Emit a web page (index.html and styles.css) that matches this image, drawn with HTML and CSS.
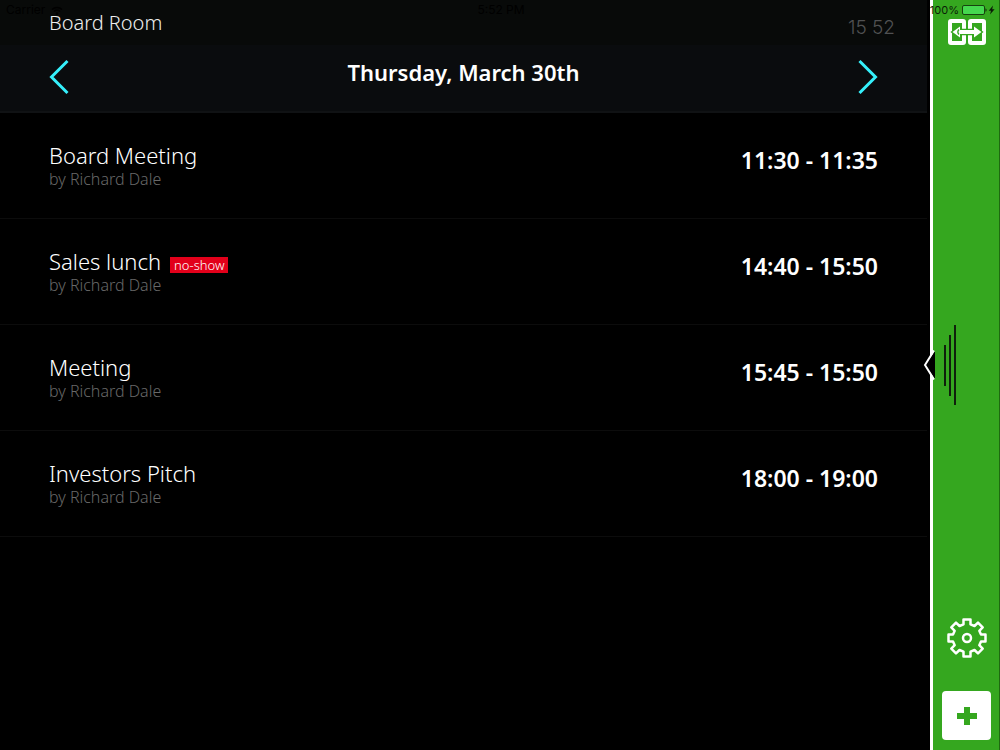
FILE: index.html
```html
<!DOCTYPE html>
<html lang="en">
<head>
    <meta charset="UTF-8">
    <meta name="viewport" content="width=device-width, initial-scale=1.0">
    <title>Board Room</title>
    <link rel="stylesheet" href="styles.css">
</head>
<body>
    <div class="status-bar">
        <span class="carrier">Carrier
            <svg width="12" height="9" viewBox="0 0 12 9" fill="none" stroke="currentColor" stroke-width="1.5" aria-hidden="true">
                <path d="M1 3.5a7 7 0 0 1 10 0M3 5.6a4.2 4.2 0 0 1 6 0"/>
                <circle cx="6" cy="7.7" r="0.6"/>
            </svg>
        </span>
        <span class="clock">5:52 PM</span>
        <span class="battery">100%
            <svg width="34" height="10" viewBox="0 0 34 10" aria-hidden="true">
                <rect x="0.5" y="0.5" width="22" height="9" rx="1.5" fill="#45d84f" stroke="#17430f"/>
                <path d="M23.5 3.2c1.4.4 1.4 3.2 0 3.6z" fill="#0b1d07"/>
                <path d="M31 0.5l-4.3 5.2h2.3l-1 3.8 4.6-5.3h-2.4z" fill="#0b1d07"/>
            </svg>
        </span>
    </div>

    <main class="schedule">
        <header class="header">
            <div class="room-bar">
                <h1 class="room">Board Room</h1>
                <time class="room-time">15 52</time>
            </div>
            <div class="day-bar">
                <button class="arrow" type="button" aria-label="Previous day">
                    <svg width="20" height="36" viewBox="0 0 20 36"><path d="M18.5 2L2.500 18l16 16"/></svg>
                </button>
                <h2 class="day">Thursday, March 30th</h2>
                <button class="arrow" type="button" aria-label="Next day">
                    <svg width="20" height="36" viewBox="0 0 20 36"><path d="M1.500 2l16 16-16 16"/></svg>
                </button>
            </div>
        </header>

        <ul class="meetings">
            <li class="meeting">
                <div>
                    <h3 class="title">Board Meeting</h3>
                    <p class="owner">by Richard Dale</p>
                </div>
                <span class="hours">11:30 - 11:35</span>
            </li>
            <li class="meeting">
                <div>
                    <h3 class="title">Sales lunch <span class="tag">no-show</span></h3>
                    <p class="owner">by Richard Dale</p>
                </div>
                <span class="hours">14:40 - 15:50</span>
            </li>
            <li class="meeting">
                <div>
                    <h3 class="title">Meeting</h3>
                    <p class="owner">by Richard Dale</p>
                </div>
                <span class="hours">15:45 - 15:50</span>
            </li>
            <li class="meeting">
                <div>
                    <h3 class="title">Investors Pitch</h3>
                    <p class="owner">by Richard Dale</p>
                </div>
                <span class="hours">18:00 - 19:00</span>
            </li>
        </ul>
    </main>

    <aside class="sidebar">
        <button class="switch" type="button" aria-label="Switch room">
            <svg width="40" height="28" viewBox="0 0 40 28" aria-hidden="true">
                <g fill="none" stroke="#fff" stroke-width="4">
                    <rect x="3" y="3" width="14" height="22" rx="1"/>
                    <rect x="23" y="3" width="14" height="22" rx="1"/>
                </g>
                <path d="M5.500 14L13 8.500V12h14V8.500l7.500 5.500-7.500 5.500V16H13v3.500z" fill="none" stroke="#35a71f" stroke-width="2.500"/>
                <path d="M5.500 14L13 8.500V12h14V8.500l7.500 5.500-7.500 5.500V16H13v3.500z" fill="#fff"/>
                <path d="M12 11.500c-1.500 1.500-1.500 3.500 0 5" fill="none" stroke="#35a71f" stroke-width="1.500"/>
            </svg>
        </button>
        <button class="handle" type="button" aria-label="Slide panel">
            <svg width="34" height="82" viewBox="0 0 34 82" aria-hidden="true">
                <path d="M12 27L2 41l10 14z" fill="#000"/>
                <path d="M11 26.500L2 41l9 14.500" fill="none" stroke="#fff" stroke-width="2"/>
                <path d="M22 21v41M27 11v61M32 1v80" fill="none" stroke="#10200c" stroke-width="2"/>
            </svg>
        </button>
        <div class="tools">
            <button type="button" aria-label="Settings">
                <svg width="40" height="40" viewBox="0 0 40 40" fill="none" stroke="#fff" stroke-width="2.500" stroke-linejoin="round" aria-hidden="true">
                    <path d="M16.500 1.500h7v4.800l4 1.700 3.500-3.400 4.700 4.700-3.400 3.500 1.700 3.700h4.500v7h-4.500l-1.700 3.700 3.400 3.500-4.700 4.700-3.500-3.400-4 1.700v4.800h-7v-4.800l-4-1.700L9 35.400l-4.700-4.700 3.400-3.500L6 23.500H1.500v-7H6l1.700-3.700-3.400-3.500L9 4.600 12.500 8l4-1.700z"/>
                    <circle cx="20" cy="20" r="4"/>
                </svg>
            </button>
            <button class="add" type="button" aria-label="Add meeting">
                <svg width="20" height="20" viewBox="0 0 20 20" aria-hidden="true"><path d="M10 1v18M0 10h20"/></svg>
            </button>
        </div>
    </aside>
</body>
</html>
```
FILE: styles.css
```css
* {
    box-sizing: border-box;
}
body {
    display: flex;
    position: relative;
    min-height: 100vh;
    margin: 0;
    background-color: #000;
    color: #fff;
    font-family: "Noto Sans", sans-serif;
}
h1, h2, h3, p, ul {
    margin: 0;
    padding: 0;
}
ul {
    list-style: none;
}
button {
    padding: 0;
    border: none;
    background: none;
    cursor: pointer;
}
svg {
    display: block;
}

/* Device status bar, lies over the whole page */
.status-bar {
    position: absolute;
    top: 0;
    left: 0;
    right: 0;
    display: grid;
    grid-template-columns: 1fr auto 1fr;
    align-items: center;
    height: 20px;
    padding: 0 4px 0 6px;
    font: 12px/20px Inter, sans-serif;
    color: #000;
    z-index: 1;
    pointer-events: none;
}
.carrier, .battery {
    display: flex;
    align-items: center;
    gap: 6px;
}
.battery {
    justify-content: flex-end;
    gap: 3px;
    font-size: 11px;
    color: #0b1d07;
}

.schedule {
    flex: 1;
    padding-right: 3px;
}
.header {
    border-bottom: 2px solid #101214;
    background-color: #0a0c0e;
}
.room-bar {
    display: flex;
    justify-content: space-between;
    height: 45px;
    padding: 10px 32px 0 49px;
    background-color: #080a09;
}
.room {
    font-size: 20px;
    line-height: 26px;
    font-weight: 300;
    color: #eee;
}
.room-time {
    font: 300 19px/36px Inter, sans-serif;
    color: #505152;
}
.day-bar {
    display: flex;
    justify-content: space-between;
    align-items: flex-start;
    height: 66px;
    padding: 14px 49px 0;
}
.arrow svg {
    fill: none;
    stroke: #35f0fb;
    stroke-width: 3;
}
.day {
    font-size: 22px;
    line-height: 26px;
    font-weight: 600;
}

.meeting {
    display: flex;
    justify-content: space-between;
    align-items: flex-start;
    padding: 28px 49px 29px;
    border-bottom: 1px solid #0c0c0c;
}
.title {
    display: flex;
    align-items: center;
    gap: 9px;
    font-size: 22px;
    line-height: 28px;
    font-weight: 300;
    color: #fff;
}
.tag {
    margin-top: 8px;
    padding: 0 4px;
    background-color: #e2001a;
    font-size: 13px;
    line-height: 16px;
}
.owner {
    font-size: 16px;
    line-height: 20px;
    font-weight: 300;
    color: #686868;
}
.hours {
    font-size: 23px;
    line-height: 38px;
    font-weight: 600;
}

.sidebar {
    display: grid;
    grid-template-rows: 1fr auto 1fr;
    justify-items: center;
    width: 70px;
    padding: 18px 0 10px 1px;
    border-left: 3px solid #fff;
    border-right: 1px solid #1e6a10;
    background-color: #35a71f;
}
.switch {
    align-self: start;
}
.handle {
    justify-self: start;
    margin: 0 0 28px -11px;
}
.tools {
    display: flex;
    flex-direction: column;
    align-self: end;
    align-items: center;
    gap: 33px;
}
.add {
    display: grid;
    place-items: center;
    width: 49px;
    height: 49px;
    border-radius: 4px;
    background-color: #fff;
}
.add path {
    stroke: #35a71f;
    stroke-width: 6;
}
```
